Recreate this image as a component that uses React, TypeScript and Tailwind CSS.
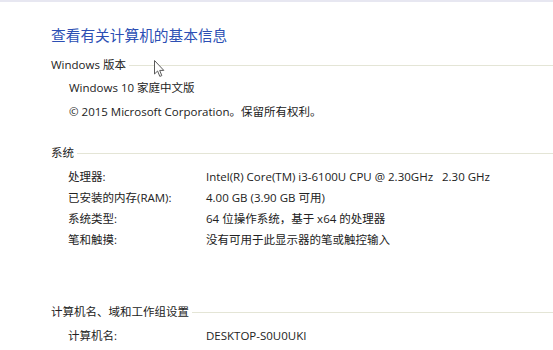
import React from 'react';

const font = { fontFamily: '"Open Sans", "Noto Sans CJK SC", sans-serif' };

const SectionHead = ({ title, className = '' }: { title: string; className?: string }) => (
  <div className={`flex items-center gap-[3px] h-[22px] leading-[22px] text-[11.5px] text-[#222] ${className}`}>
    <span>{title}</span>
    <div className="flex-1 h-px bg-[#e4e5d6] mt-px" />
  </div>
);

const Row = ({ label, value }: { label: string; value: string }) => (
  <div className="flex h-[21px] leading-[21px] text-[11.5px] text-[#222] pl-[17px]">
    <span className="w-[138px] shrink-0">{label}</span>
    <span className="whitespace-pre">{value}</span>
  </div>
);

const Cursor = () => (
  <svg className="absolute left-[154px] top-[58px]" width="11" height="18" viewBox="0 0 11 18">
    <path
      d="M0.5 0.5 L0.5 14 L3.6 11 L5.8 16.4 L7.8 15.6 L5.7 10.4 L9.8 10.4 Z"
      fill="#ffffff"
      stroke="#5a5a5a"
      strokeWidth="1"
      strokeLinejoin="round"
    />
  </svg>
);

export default function App() {
  return (
    <div className="relative w-[553px] h-[350px] overflow-hidden bg-white border-t-2 border-[#e7e7f1]" style={font}>
      <div className="pl-[51px] pt-[23px]">
        <h1 className="text-[14.7px] leading-[20px] text-[#2c4fb4] font-normal">查看有关计算机的基本信息</h1>

        <SectionHead title="Windows 版本" className="mt-[9px]" />
        <div className="pl-[18px] text-[11.5px] text-[#222]">
          <div className="h-[22px] leading-[22px] mt-px">Windows 10 家庭中文版</div>
          <div className="h-[22px] leading-[22px] mt-[2px]">© 2015 Microsoft Corporation。保留所有权利。</div>
        </div>

        <SectionHead title="系统" className="mt-[19px]" />
        <div className="mt-[2px]">
          <Row label="处理器:" value="Intel(R) Core(TM) i3-6100U CPU @ 2.30GHz   2.30 GHz" />
          <Row label="已安装的内存(RAM):" value="4.00 GB (3.90 GB 可用)" />
          <Row label="系统类型:" value="64 位操作系统，基于 x64 的处理器" />
          <Row label="笔和触摸:" value="没有可用于此显示器的笔或触控输入" />
        </div>

        <SectionHead title="计算机名、域和工作组设置" className="mt-[51px]" />
        <div className="mt-[2px]">
          <Row label="计算机名:" value="DESKTOP-S0U0UKI" />
        </div>
      </div>
      <Cursor />
    </div>
  );
}
